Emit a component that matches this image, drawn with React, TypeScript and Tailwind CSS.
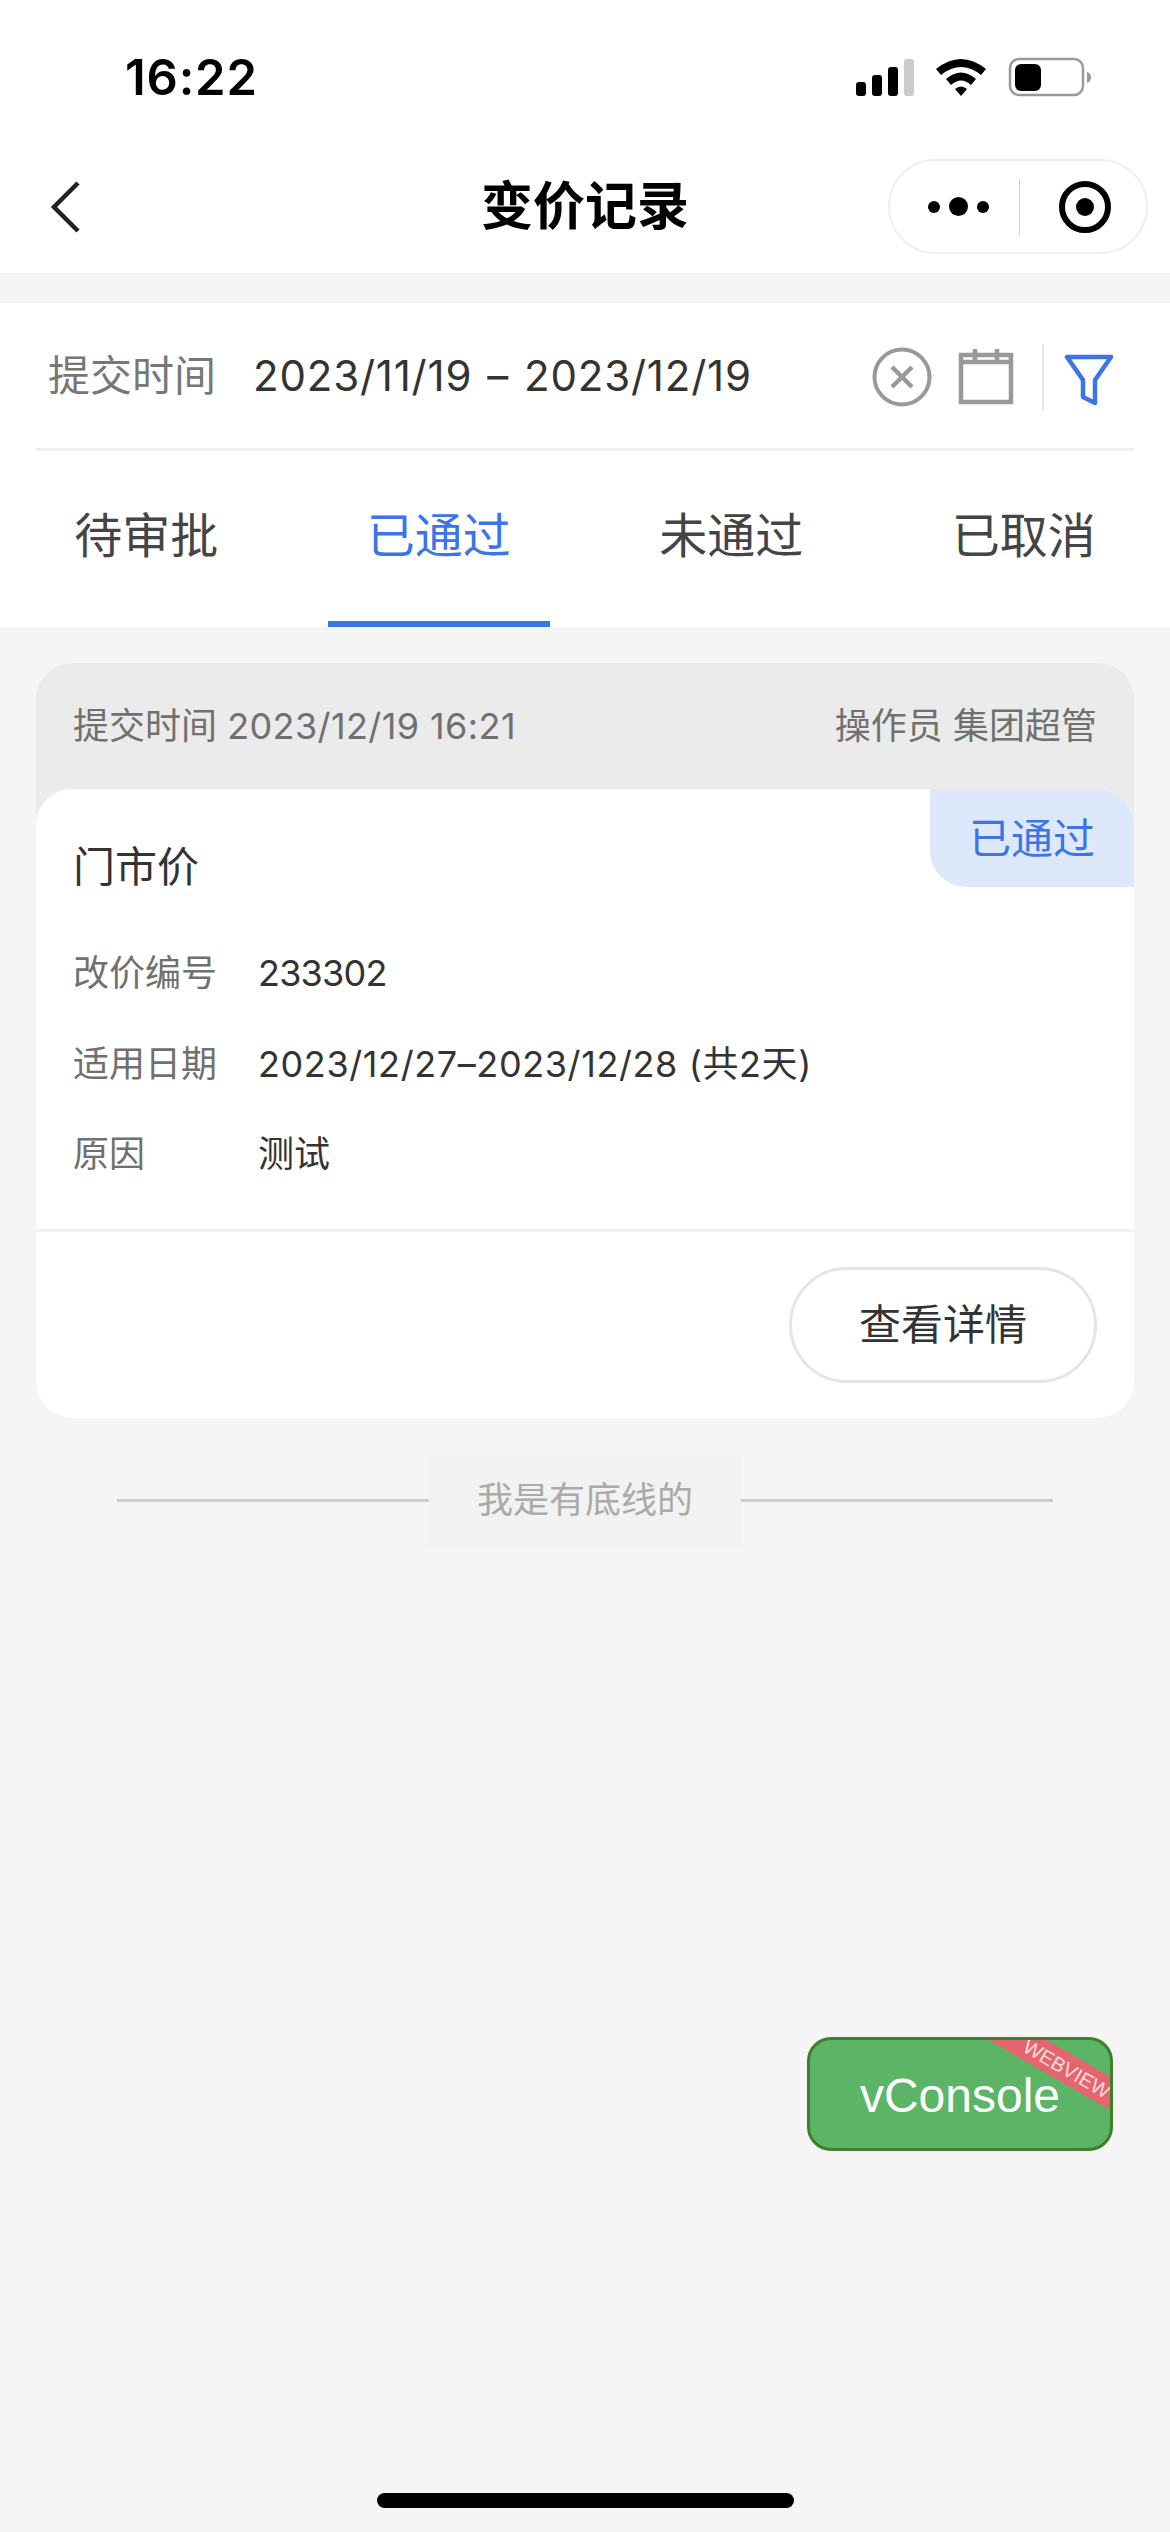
const sans = "font-['Inter','Noto_Sans_CJK_SC',sans-serif]";

function StatusIcons() {
  return (
    <svg width="240" height="44" viewBox="0 0 240 44" className="block">
      <rect x="0" y="26" width="10" height="14" rx="3" fill="#000" />
      <rect x="16" y="19" width="10" height="21" rx="3" fill="#000" />
      <rect x="32" y="11" width="10" height="29" rx="3" fill="#000" />
      <rect x="48" y="3" width="10" height="37" rx="3" fill="#ccc" />
      <path d="M80 13 Q105 -7 130 13 L125 19 Q105 3 85 19 Z" fill="#000" />
      <path d="M90 23 Q105 10 120 23 L115 29 Q105 20 95 29 Z" fill="#000" />
      <path d="M99 33 Q105 28 111 33 L105 40 Z" fill="#000" />
      <rect x="154" y="3" width="73" height="36" rx="9" fill="none" stroke="#999" strokeWidth="2.5" />
      <rect x="159" y="8" width="26" height="27" rx="6" fill="#000" />
      <path d="M231 16 Q235 17 235 21 Q235 26 231 27 Z" fill="#999" />
    </svg>
  );
}

function Row({ label, value, track }: { label: string; value: string; track: string }) {
  return (
    <div className="flex h-[90.5px] items-center text-[36px]">
      <span className="w-[185px] text-[#707070]">{label}</span>
      <span className={`text-[#333] ${track}`}>{value}</span>
    </div>
  );
}

function Tab({ label, active }: { label: string; active?: boolean }) {
  return (
    <div className={`relative flex items-start justify-center pt-[53px] leading-[64px] ${active ? "text-[#3b75e6]" : "text-[#444]"}`}>
      {label}
      {active && <span className="absolute bottom-0 left-1/2 h-[6px] w-[222px] -translate-x-1/2 bg-[#3b75e6]" />}
    </div>
  );
}

export default function App() {
  return (
    <div className={`${sans} relative h-[2532px] w-[1170px] overflow-hidden bg-[#f5f5f5]`}>
      {/* Status + nav */}
      <div className="bg-white">
        <div className="flex h-[159px] items-start justify-between pl-[125px] pr-[74px] pt-[50px]">
          <span className="text-[49px] font-semibold leading-[56px] tracking-[0.8px] text-black">16:22</span>
          <div className="pt-[6px]">
            <StatusIcons />
          </div>
        </div>
        <div className="flex h-[114px] items-start pl-[22px] pr-[22px]">
          <div className="w-[260px] pl-[28px]">
            <svg width="32" height="52" viewBox="0 0 32 52" className="mt-[22px]" fill="none">
              <path d="M28 2 L4 26 L28 50" stroke="#222" strokeWidth="4.5" />
            </svg>
          </div>
          <div className="mt-[20px] flex-1 text-center text-[52px] font-semibold leading-[56px] text-black">变价记录</div>
          <div className="flex h-[95px] w-[260px] items-center rounded-full border-2 border-[#eeeeee]">
            <div className="flex flex-1 items-center justify-center gap-[9px] pl-[7px]">
              <span className="h-[12px] w-[12px] rounded-full bg-black" />
              <span className="h-[19px] w-[19px] rounded-full bg-black" />
              <span className="h-[12px] w-[12px] rounded-full bg-black" />
            </div>
            <span className="h-[56px] w-[1px] bg-[#ccc]" />
            <div className="flex flex-1 items-center justify-center pl-[4px]">
              <span className="flex h-[52px] w-[52px] items-center justify-center rounded-full border-[6px] border-black">
                <span className="h-[18px] w-[18px] rounded-full bg-black" />
              </span>
            </div>
          </div>
        </div>
      </div>

      {/* Filter + tabs */}
      <div className="mt-[30px] bg-white">
        <div className="mx-[36px] flex h-[148px] items-center border-b-[3px] border-[#efefef] pl-[12px]">
          <span className="text-[42px] text-[#777]">提交时间</span>
          <span className="ml-[37px] flex items-center text-[42px] tracking-[0.8px] text-[#333]">
            <span>2023/11/19</span>
            <span className="mx-[15px]">–</span>
            <span>2023/12/19</span>
          </span>
          <div className="ml-auto mt-[3px] flex items-center">
            <svg width="60" height="60" viewBox="0 0 60 60" fill="none" stroke="#999" strokeWidth="4">
              <circle cx="30" cy="30" r="27.5" />
              <path d="M20 20 L40 40 M40 20 L20 40" strokeWidth="4.5" />
            </svg>
            <svg width="56" height="56" viewBox="0 0 56 56" fill="none" stroke="#999" strokeWidth="4.5" className="ml-[26px]">
              <rect x="3" y="6" width="50" height="47" />
              <path d="M3 13 H53 M17 0 V13 M39 0 V13" />
            </svg>
            <span className="ml-[28px] h-[66px] w-[2px] bg-[#e5e5e5]" />
            <svg width="50" height="54" viewBox="0 0 50 54" fill="none" stroke="#3b75e6" strokeWidth="4.5" strokeLinejoin="round" className="ml-[20px] mr-[20px] mt-[6px]">
              <path d="M3 4 H47 L31 27 V50 L19 44 V27 Z" />
            </svg>
          </div>
        </div>
        <div className="grid h-[176px] grid-cols-4 text-center text-[48px]">
          <Tab label="待审批" />
          <Tab label="已通过" active />
          <Tab label="未通过" />
          <Tab label="已取消" />
        </div>
      </div>

      {/* Card */}
      <div className="mx-[36px] mt-[36px] overflow-hidden rounded-[36px] bg-[#ebebeb]">
        <div className="flex h-[126px] items-center justify-between px-[37px] text-[36px] text-[#707070]">
          <span>
            提交时间 <span className="tracking-[0.4px]">2023/12/19 16:21</span>
          </span>
          <span>操作员 集团超管</span>
        </div>
        <div className="relative rounded-[36px] bg-white">
          <span className="absolute right-0 top-0 flex h-[98px] w-[204px] items-center justify-center rounded-bl-[36px] rounded-tr-[36px] bg-[#dde8fb] text-[42px] text-[#3b75e6]">
            已通过
          </span>
          <div className="px-[37px] pb-[29px] pt-[50px]">
            <div className="text-[42px] leading-[56px] text-[#333]">门市价</div>
            <div className="mt-[33px]">
              <Row label="改价编号" value="233302" track="tracking-[-0.8px]" />
              <Row label="适用日期" value="2023/12/27–2023/12/28 (共2天)" track="tracking-[0.6px]" />
              <Row label="原因" value="测试" track="" />
            </div>
          </div>
          <div className="h-[3px] bg-[#f2f2f2]" />
          <div className="flex justify-end pb-[35px] pr-[37px] pt-[35px]">
            <button className="h-[116px] w-[308px] rounded-full border-[3px] border-[#e5e5e5] text-[42px] text-[#333]">
              查看详情
            </button>
          </div>
        </div>
      </div>

      {/* Bottom line */}
      <div className="mx-[117px] mt-[36px] flex items-center">
        <span className="h-[3px] flex-1 bg-[#cccccc]" />
        <span className="flex h-[93px] w-[312px] items-center justify-center bg-[#f2f2f2] text-[36px] text-[#aaa]">
          我是有底线的
        </span>
        <span className="h-[3px] flex-1 bg-[#cccccc]" />
      </div>

      {/* vConsole overlay */}
      <div className="absolute left-[807px] top-[2037px] flex h-[114px] w-[306px] items-center justify-center overflow-hidden rounded-[24px] border-[3px] border-[#3f7f2a] bg-[#5cb567] pt-[3px] font-['Liberation_Sans',sans-serif] text-[48px] text-white">
        vConsole
        <span className="absolute right-[-67px] top-[14px] flex h-[29px] w-[220px] rotate-[30deg] items-center justify-center bg-[#e5656f] text-[20px] leading-none text-[#fbdde0]">
          WEBVIEW
        </span>
      </div>

      {/* Home indicator */}
      <div className="absolute bottom-[24px] left-[377px] h-[15px] w-[417px] rounded-full bg-black" />
    </div>
  );
}
